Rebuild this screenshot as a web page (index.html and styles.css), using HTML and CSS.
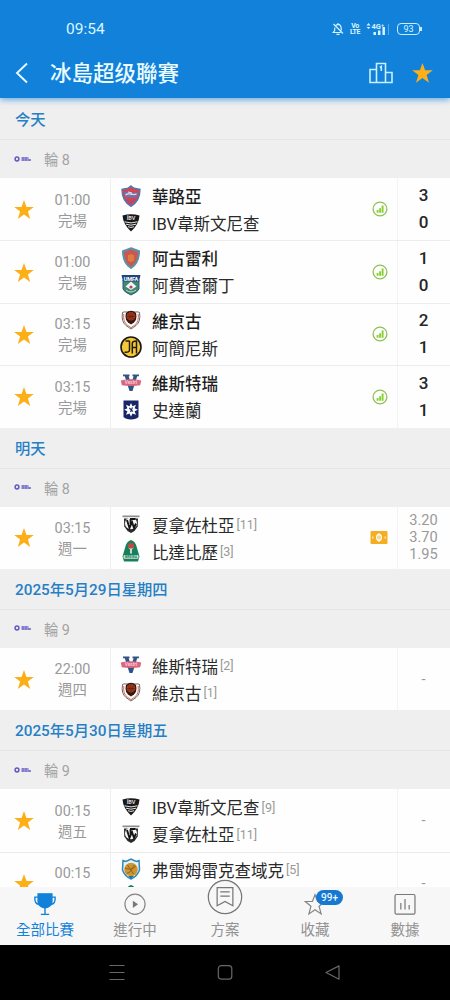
FILE: index.html
```html
<!DOCTYPE html>
<html lang="zh-Hant">
<head>
    <meta charset="UTF-8">
    <meta name="viewport" content="width=device-width, initial-scale=1.0">
    <title>冰島超级聯賽</title>
    <link rel="stylesheet" href="styles.css">
</head>
<body>
    <svg class="defs" width="0" height="0">
        <symbol id="star" viewBox="0 0 20 20">
            <path fill="#fdaf17" d="M10 0l2.500 7h7.300l-5.900 4.400 2.300 7.500-6.200-4.500-6.200 4.500 2.300-7.500L.2 7h7.300z"/>
        </symbol>
        <symbol id="league" viewBox="0 0 18 8">
            <circle cx="3" cy="4" r="1.900" fill="none" stroke="#6358c4" stroke-width="1.500"/>
            <path d="M7.500 3h7M7.500 5h9.500" stroke="#6358c4" stroke-width="1.500" stroke-dasharray="3 .2"/>
        </symbol>
        <symbol id="stats" viewBox="0 0 16 16">
            <circle cx="8" cy="8" r="6.900" fill="none" stroke="#90c155" stroke-width="1.300"/>
            <path d="M5.600 8.900v2.800M8.100 7.300v4.400M10.600 4.600v7.100" stroke="#84d02f" stroke-width="1.900"/>
        </symbol>
        <symbol id="odds" viewBox="0 0 18 13">
            <rect x=".5" width="17" height="13" rx="1" fill="#f5ae21"/>
            <ellipse cx="9" cy="6.500" rx="2.300" ry="3" fill="none" stroke="#fff" stroke-width="1.300"/>
            <path d="M9 2v9M2.800 5.500v2M15.200 5.500v2" stroke="#fff" stroke-width="1"/>
        </symbol>

        <!-- club crests -->
        <symbol id="kahla" viewBox="0 0 22 22">
            <path d="M11 1l3 2.300 6 1c0 7-2 13-9 17C4 17.300 2 11.300 2 4.300l6-1z" fill="#d8434c" stroke="#4a79b8" stroke-width="1.400"/>
            <path d="M4 8c5-3 9 1 14-1l-1 5c-4 2-7-1-11 1z" fill="#6a78ad"/>
            <path d="M5.500 10c4-3 6 1 11-1M8 7l4 1" stroke="#e9dce4" stroke-width="1.200" fill="none"/>
            <path d="M7 15l4 3 4-4" stroke="#8e5382" stroke-width="1.400" fill="none"/>
        </symbol>
        <symbol id="ibv" viewBox="0 0 22 22">
            <path d="M2.500 3.500q8.500-2.500 17 0Q19 12 11 19.500 3 12 2.500 3.500z" fill="#191919"/>
            <text x="11" y="8.300" class="crest-text" fill="#ddd" font-size="5.500">ÍBV</text>
            <path d="M4.500 9.800q6.500 2.200 13 0M6 12.200q5 2 10 0M8 14.700q3 1.500 6 0" fill="none" stroke="#e5e5e5" stroke-width="1"/>
        </symbol>
        <symbol id="argul" viewBox="0 0 22 22">
            <path d="M11 1.300l8 3c0 7-2 12.700-8 16.700-6-4-8-9.700-8-16.700z" fill="#c75a50" stroke="#5b91ae" stroke-width="2"/>
            <circle cx="11" cy="11" r="4" fill="#d65b35"/>
            <path d="M9 8v6M11 7v8M13 8v6" stroke="#edac59" stroke-width=".8"/>
        </symbol>
        <symbol id="aftur" viewBox="0 0 22 22">
            <path d="M3 6h16v9q-1 3-8 6-7-3-8-6z" fill="#3d8b68" stroke="#31568d" stroke-width="1"/>
            <path d="M1.500 1h19l-1.500 6.500H3z" fill="#21457f"/>
            <text x="11" y="6.500" class="crest-text" fill="#fff" font-size="5.500">UMFA</text>
            <path d="M11 7.500l5.500 5L11 16l-5.500-3.500z" fill="#f4f4f8"/>
            <circle cx="11" cy="13" r="1.600" fill="#b6426b"/>
            <path d="M6 16q5 4 10 0" fill="none" stroke="#b9e1ce" stroke-width="1"/>
        </symbol>
        <symbol id="viking" viewBox="0 0 22 22">
            <path d="M2.500 3.500Q4 2.500 6 3h10q2-.5 3.500.5 1.500 9-3.500 13L11 20l-5-3.500q-5-4-3.500-13z" fill="#fff" stroke="#4a403e" stroke-width=".8"/>
            <path d="M3.800 5q-1 8 3.700 11.200L11 18.700l3.500-2.500q4.700-3.200 3.700-11.200" fill="none" stroke="#cf6b5a" stroke-width="1"/>
            <path d="M6 4q5-4.500 10 0 1.500 7-2 9.500l-3 2-3-2q-3.500-2.500-2-9.500z" fill="#351711"/>
            <circle cx="11" cy="7.300" r="4.300" fill="#a83a1d"/>
            <path d="M7 7.500h8M11 3.500v10M8.500 4.500q2 3 0 6M13.500 4.500q-2 3 0 6" stroke="#5c1e0e" stroke-width=".7" fill="none"/>
        </symbol>
        <symbol id="ia" viewBox="0 0 22 22">
            <circle cx="11" cy="11" r="10" fill="#f5c83a" stroke="#191710" stroke-width="1.600"/>
            <path d="M9.500 4.800V14q0 2.700-5 2.200M5.500 5h4M12.300 17.500V7.500q0-2.500 4.200-2.500v12.500M12.300 11.500h4.200" fill="none" stroke="#211c0c" stroke-width="1.500"/>
        </symbol>
        <symbol id="vestri" viewBox="0 0 22 22">
            <path d="M3 2.500h6.500v1.700H8.700L11 12l2.600-7.800h-1.100V2.500H19v1.700h-1.800L12.500 19h-3L4.800 4.200H3z" fill="#2f5583"/>
            <path d="M.8 8.500q10-2.500 20.400 0l-1 4.700q-9 1.500-18.400 0z" fill="#d96580"/>
            <text x="11" y="12.200" class="crest-text" fill="#f4c8d3" font-size="4.800">Vestri</text>
        </symbol>
        <symbol id="stjarnan" viewBox="0 0 22 22">
            <path d="M3.500 1.500h15V18q-2 2-7.500 2.500Q5.500 20 3.500 18z" fill="#182567"/>
            <path d="M11 4l1.500 3.200L16 5.800l-1.400 3.500 3.200 1.500-3.200 1.500L16 15.800l-3.500-1.400L11 17.600l-1.500-3.200L6 15.800l1.400-3.500-3.200-1.500 3.200-1.500L6 5.800l3.500 1.400z" fill="#fff"/>
            <path d="M9.300 9l3.500 3.500M12.500 8.500l-2 4.500" stroke="#182567" stroke-width="1.100"/>
        </symbol>
        <symbol id="hafnar" viewBox="0 0 22 22">
            <path d="M2.500 2.500h17v1.700h-17z" fill="#8d8d8d"/>
            <path d="M4 5.500h14l-.3 8L14.500 18 11 20l-3.500-2-3.200-4.500z" fill="#2a2a2a"/>
            <circle cx="11" cy="10.300" r="6" fill="#f6f6f6"/>
            <path d="M7 7l2.500 8L12 9l2 6 2-4.500" fill="none" stroke="#151515" stroke-width="1.900"/>
            <path d="M10 6h5.500M10.500 6v5" fill="none" stroke="#151515" stroke-width="1.800"/>
        </symbol>
        <symbol id="breida" viewBox="0 0 22 22">
            <path d="M11 0q4.500 1 6 8l2.500 8.500-1.500 5H4l-1.500-5L5 8q1.500-7 6-8z" fill="#16805d"/>
            <circle cx="11" cy="6" r="3" fill="#c44740"/>
            <path d="M8 7.500q3 2 6 0l-2 2v4h-2v-4z" fill="#c9ddd2"/>
            <rect x="3.500" y="15" width="15" height="3.800" rx="1" fill="#cce5d9"/>
            <text x="11" y="18.200" class="crest-text" fill="#26795a" font-size="3.500">BREIÐA</text>
        </symbol>
        <symbol id="fram" viewBox="0 0 22 22">
            <path d="M3 2.500l2.500 1L8 2.500l3-1.500 3 1.500 2.500 1 2.500-1 .5 9.500q-2 6-8.500 9-6.500-3-8.500-9z" fill="#e6f3f9" stroke="#3189b9" stroke-width="1.500"/>
            <circle cx="11" cy="11.500" r="6.800" fill="#d0942f"/>
            <path d="M5 10q6 3 11-2M7 15q4 0 7-8M7.500 7l6 9" fill="none" stroke="#8c6529" stroke-width="1"/>
            <path d="M8 18h6l-3 2.500z" fill="#206e9b"/>
        </symbol>
    </svg>

    <div class="phone">
        <header class="header">
            <div class="status-bar">
                <span class="clock">09:54</span>
                <div class="status-icons">
                    <svg width="12" height="14" viewBox="0 0 12 14" fill="none" stroke="#d5f4ff" stroke-width="1.200">
                        <path d="M3.300 4.500Q4 2.500 6 2.300q3 .2 3.200 4v2.200M2.700 5.500v3L1.200 10.500h7.600M6 1v1.300M4.500 12.300h3M1.500 2l9.500 9.500"/>
                    </svg>
                    <span class="volte"><span>Vo</span><span>LTE</span></span>
                    <svg class="signal" width="25" height="14" viewBox="0 0 25 14">
                        <path d="M.5 3.500L2.500 1l2 2.500zM.5 5L2.500 7l2-2z" fill="#d5f4ff"/>
                        <text x="5.500" y="6.800" class="signal-text" fill="#d5f4ff">4G⁺</text>
                        <path d="M8.700 10v3M13.200 8.500v4.500M17.700 5V13" stroke="#d5f4ff" stroke-width="2.500"/>
                        <path d="M22.500 2v11" stroke="#4da6e9" stroke-width="1.200"/>
                    </svg>
                    <span class="battery">93</span>
                </div>
            </div>
            <div class="title-bar">
                <svg class="back" width="14" height="22" viewBox="0 0 14 22" fill="none" stroke="#e8fbff" stroke-width="1.900">
                    <path d="M12 1.500L2 11l10 9.500"/>
                </svg>
                <h1 class="title">冰島超级聯賽</h1>
                <svg class="podium" width="24" height="22" viewBox="0 0 24 22" fill="none" stroke="#c9f0ff" stroke-width="1.600">
                    <path d="M7.500 20.500V1.500h9v19M7.500 7.500H1v13h22V10.500h-6.500M10.800 5.500l1.500-1V9"/>
                </svg>
                <svg class="fav" width="21" height="21"><use href="#star"/></svg>
            </div>
        </header>

        <main class="list">
            <section>
                <h2 class="day">今天</h2>
                <div class="round"><svg width="18" height="8"><use href="#league"/></svg><span>輪 8</span></div>
                <div class="match">
                    <svg class="star"><use href="#star"/></svg>
                    <div class="when"><span>01:00</span><span>完場</span></div>
                    <div class="teams">
                        <div class="team win"><svg><use href="#kahla"/></svg><span>華路亞</span></div>
                        <div class="team"><svg><use href="#ibv"/></svg><span>IBV韋斯文尼查</span></div>
                    </div>
                    <svg class="stats"><use href="#stats"/></svg>
                    <div class="score"><span>3</span><span>0</span></div>
                </div>
                <div class="match">
                    <svg class="star"><use href="#star"/></svg>
                    <div class="when"><span>01:00</span><span>完場</span></div>
                    <div class="teams">
                        <div class="team win"><svg><use href="#argul"/></svg><span>阿古雷利</span></div>
                        <div class="team"><svg><use href="#aftur"/></svg><span>阿費查爾丁</span></div>
                    </div>
                    <svg class="stats"><use href="#stats"/></svg>
                    <div class="score"><span>1</span><span>0</span></div>
                </div>
                <div class="match">
                    <svg class="star"><use href="#star"/></svg>
                    <div class="when"><span>03:15</span><span>完場</span></div>
                    <div class="teams">
                        <div class="team win"><svg><use href="#viking"/></svg><span>維京古</span></div>
                        <div class="team"><svg><use href="#ia"/></svg><span>阿簡尼斯</span></div>
                    </div>
                    <svg class="stats"><use href="#stats"/></svg>
                    <div class="score"><span>2</span><span>1</span></div>
                </div>
                <div class="match">
                    <svg class="star"><use href="#star"/></svg>
                    <div class="when"><span>03:15</span><span>完場</span></div>
                    <div class="teams">
                        <div class="team win"><svg><use href="#vestri"/></svg><span>維斯特瑞</span></div>
                        <div class="team"><svg><use href="#stjarnan"/></svg><span>史達蘭</span></div>
                    </div>
                    <svg class="stats"><use href="#stats"/></svg>
                    <div class="score"><span>3</span><span>1</span></div>
                </div>
            </section>

            <section>
                <h2 class="day">明天</h2>
                <div class="round"><svg width="18" height="8"><use href="#league"/></svg><span>輪 8</span></div>
                <div class="match">
                    <svg class="star"><use href="#star"/></svg>
                    <div class="when"><span>03:15</span><span>週一</span></div>
                    <div class="teams">
                        <div class="team"><svg><use href="#hafnar"/></svg><span>夏拿佐杜亞</span><small>[11]</small></div>
                        <div class="team"><svg><use href="#breida"/></svg><span>比達比歷</span><small>[3]</small></div>
                    </div>
                    <svg class="odds-icon"><use href="#odds"/></svg>
                    <div class="odds"><span>3.20</span><span>3.70</span><span>1.95</span></div>
                </div>
            </section>

            <section>
                <h2 class="day">2025年5月29日星期四</h2>
                <div class="round"><svg width="18" height="8"><use href="#league"/></svg><span>輪 9</span></div>
                <div class="match">
                    <svg class="star"><use href="#star"/></svg>
                    <div class="when"><span>22:00</span><span>週四</span></div>
                    <div class="teams">
                        <div class="team"><svg><use href="#vestri"/></svg><span>維斯特瑞</span><small>[2]</small></div>
                        <div class="team"><svg><use href="#viking"/></svg><span>維京古</span><small>[1]</small></div>
                    </div>
                    <div class="odds">-</div>
                </div>
            </section>

            <section>
                <h2 class="day">2025年5月30日星期五</h2>
                <div class="round"><svg width="18" height="8"><use href="#league"/></svg><span>輪 9</span></div>
                <div class="match">
                    <svg class="star"><use href="#star"/></svg>
                    <div class="when"><span>00:15</span><span>週五</span></div>
                    <div class="teams">
                        <div class="team"><svg><use href="#ibv"/></svg><span>IBV韋斯文尼查</span><small>[9]</small></div>
                        <div class="team"><svg><use href="#hafnar"/></svg><span>夏拿佐杜亞</span><small>[11]</small></div>
                    </div>
                    <div class="odds">-</div>
                </div>
                <div class="match">
                    <svg class="star"><use href="#star"/></svg>
                    <div class="when"><span>00:15</span></div>
                    <div class="teams">
                        <div class="team"><svg><use href="#fram"/></svg><span>弗雷姆雷克查域克</span><small>[5]</small></div>
                        <div class="team"><svg><use href="#breida"/></svg></div>
                    </div>
                    <div class="odds">-</div>
                </div>
            </section>
        </main>

        <nav class="tabs">
            <a class="tab active">
                <svg width="24" height="26" viewBox="0 0 24 26" fill="none" stroke="#1181da" stroke-width="1.500">
                    <path d="M4.500 2h15V10.500q-.5 6-7.500 6.500Q5 16.500 4.500 10.500z" fill="#1181da"/>
                    <path d="M4.500 5.500H1q-.5 7.500 4.500 8M19.500 5.500H23q.5 7.500-4.500 8M12 16v8M7.500 24.300h9"/>
                </svg>
                <span>全部比賽</span>
            </a>
            <a class="tab">
                <svg width="24" height="26" viewBox="0 0 24 26">
                    <circle cx="12" cy="13.300" r="10.900" fill="none" stroke="#858585" stroke-width="1.300"/>
                    <path d="M9.700 9.400l5.600 3.900-5.600 3.900z" fill="#777"/>
                </svg>
                <span>進行中</span>
            </a>
            <a class="tab plan">
                <svg width="38" height="38" viewBox="0 0 38 38" fill="none" stroke="#777" stroke-width="1.300">
                    <circle cx="19" cy="19" r="17.600" fill="#f7f7f7"/>
                    <path d="M10.700 9.200h16.600v19L19 23.600l-8.300 4.600zM14 13.700h10M14 18h10"/>
                </svg>
                <span>方案</span>
            </a>
            <a class="tab">
                <svg width="24" height="26" viewBox="0 0 24 26" fill="none" stroke="#858585" stroke-width="1.300">
                    <path d="M12 3l2.800 7.300h7.700l-6.100 5.100 2.200 8.300L12 19.200l-6.600 4.500 2.200-8.300L1.500 10.300h7.700z"/>
                </svg>
                <b class="badge">99+</b>
                <span>收藏</span>
            </a>
            <a class="tab">
                <svg width="24" height="26" viewBox="0 0 24 26" fill="none" stroke="#777" stroke-width="1.300">
                    <rect x="1.200" y="2.700" width="21.600" height="21.200" rx="1.500"/>
                    <path d="M7.500 12v7M12 7.500v11.500M16.500 14v5"/>
                </svg>
                <span>數據</span>
            </a>
        </nav>

        <footer class="system-bar">
            <svg width="18" height="18" viewBox="0 0 18 18" stroke="#686868" stroke-width="1.200"><path d="M1.500 1.500h15M1.500 8.500h15M1.500 15.500h15"/></svg>
            <svg width="18" height="18" viewBox="0 0 18 18" fill="none" stroke="#686868" stroke-width="1.200"><rect x="2.300" y="1.700" width="13.500" height="13.500" rx="3"/></svg>
            <svg width="18" height="18" viewBox="0 0 18 18" fill="none" stroke="#686868" stroke-width="1.200" stroke-linejoin="round"><path d="M15 1.900v13.300L2 8.500z"/></svg>
        </footer>
    </div>
</body>
</html>
```
FILE: styles.css
```css
* {
    box-sizing: border-box;
}

body {
    margin: 0;
    background-color: #000;
    font-family: Roboto, "Noto Sans CJK SC", sans-serif;
}

.defs {
    position: absolute;
}

.crest-text {
    font-family: Roboto, sans-serif;
    font-weight: bold;
    text-anchor: middle;
}

.phone {
    display: flex;
    flex-direction: column;
    width: 450px;
    height: 1000px;
    overflow: hidden;
}

/* header */
.header {
    position: relative;
    z-index: 1;
    flex: none;
    height: 98px;
    background-color: #1181da;
    box-shadow: 0 2px 6px rgba(17, 129, 218, 0.6);
}

.status-bar {
    display: flex;
    justify-content: space-between;
    align-items: center;
    height: 48px;
    padding: 10px 28px 0 66px;
    color: #dcf7ff;
}

.clock {
    font-size: 15.5px;
    line-height: 20px;
}

.status-icons {
    display: flex;
    align-items: center;
}

.volte {
    display: flex;
    flex-direction: column;
    width: 10px;
    margin: 0 6px 0 6px;
    font-size: 7px;
    font-weight: bold;
    line-height: 6.5px;
    text-align: center;
    letter-spacing: -0.5px;
}

.signal {
    margin-right: 6px;
}

.signal-text {
    font: bold 7.5px Roboto, sans-serif;
}

.battery {
    position: relative;
    width: 23px;
    height: 12px;
    margin-right: 2px;
    border: 1.5px solid #c5edff;
    border-radius: 4px;
    font-size: 9px;
    line-height: 10px;
    text-align: center;
}

.battery::after {
    content: "";
    position: absolute;
    top: 3px;
    right: -3px;
    width: 2px;
    height: 4px;
    background-color: #c5edff;
}

.title-bar {
    display: flex;
    align-items: center;
    height: 50px;
    padding: 0 17px 0 15px;
}

.title {
    flex: 1;
    margin: 0 0 0 21px;
    padding-top: 2px;
    color: #eafcff;
    font-size: 21.5px;
    font-weight: 500;
    line-height: 30px;
}

.podium {
    margin-right: 19px;
}

/* match list */
.list {
    flex: none;
    height: 789px;
    padding-top: 1px;
    overflow: hidden;
    background-color: #efefef;
}

.day {
    height: 41px;
    margin: 0;
    padding: 1px 0 0 15px;
    border-bottom: 1px solid #e6e6e6;
    color: #267fc5;
    font-size: 15.3px;
    font-weight: 500;
    line-height: 41px;
}

.round {
    display: flex;
    align-items: center;
    gap: 12px;
    height: 38px;
    padding: 0 0 1px 14px;
    color: #a3a3a3;
    font-size: 14.3px;
}

.match {
    display: flex;
    align-items: center;
    height: 62.4px;
    background-color: #fefefe;
}

.match + .match {
    border-top: 1px solid #ececec;
}

.star {
    width: 20px;
    height: 20px;
    margin: 1px 20px 0 14px;
}

.when {
    display: flex;
    flex-direction: column;
    align-self: flex-start;
    width: 37px;
    padding-top: 11.5px;
    color: #999;
    font-size: 14.4px;
    line-height: 21px;
    text-align: center;
}

.match + .match .when {
    padding-top: 10.5px;
}

.teams {
    display: flex;
    flex: 1;
    flex-direction: column;
    align-self: stretch;
    margin-left: 19px;
    padding: 4.5px 0 0 9px;
    border-left: 1px solid #efefef;
}

.match + .match .teams {
    padding-top: 3.5px;
}

.team {
    display: flex;
    align-items: center;
    height: 27px;
    color: #2a2a2a;
    font-size: 16.5px;
}

.team svg {
    width: 22px;
    height: 22px;
    margin: 0 10px 1px 0;
}

.team small {
    margin-left: 2px;
    color: #999;
    font-size: 12.5px;
}

.win {
    color: #1e1e1e;
    font-weight: 500;
}

.stats {
    width: 16px;
    height: 16px;
    margin-right: 9px;
}

.odds-icon {
    width: 18px;
    height: 13px;
    margin-right: 9px;
}

.score,
.odds {
    display: flex;
    flex-direction: column;
    align-self: stretch;
    justify-content: center;
    width: 53px;
    padding-right: 1px;
    border-left: 1px solid #f3f3f3;
    text-align: center;
}

.score {
    color: #262626;
    font-size: 17px;
    font-weight: 500;
    line-height: 27px;
}

.odds {
    color: #999;
    font-size: 14.6px;
    line-height: 17.2px;
}

/* bottom tabs */
.tabs {
    position: relative;
    z-index: 1;
    display: flex;
    flex: none;
    height: 58px;
    background-color: #f7f7f7;
}

.tab {
    position: relative;
    display: flex;
    flex: 1;
    flex-direction: column;
    align-items: center;
    padding-top: 5px;
    color: #929292;
    font-size: 14.5px;
    line-height: 29px;
}

.tab.active {
    color: #1181da;
}

.plan svg {
    margin-top: -13px;
    margin-bottom: 1px;
}

.badge {
    position: absolute;
    top: 3px;
    left: 46px;
    width: 27px;
    height: 15px;
    border-radius: 8px;
    background-color: #1678d0;
    color: #eaf7ff;
    font-size: 10px;
    font-weight: 500;
    line-height: 15px;
    text-align: center;
}

/* android buttons */
.system-bar {
    display: flex;
    flex: 1;
    justify-content: center;
    align-items: center;
    gap: 90px;
    background-color: #000;
}
```
